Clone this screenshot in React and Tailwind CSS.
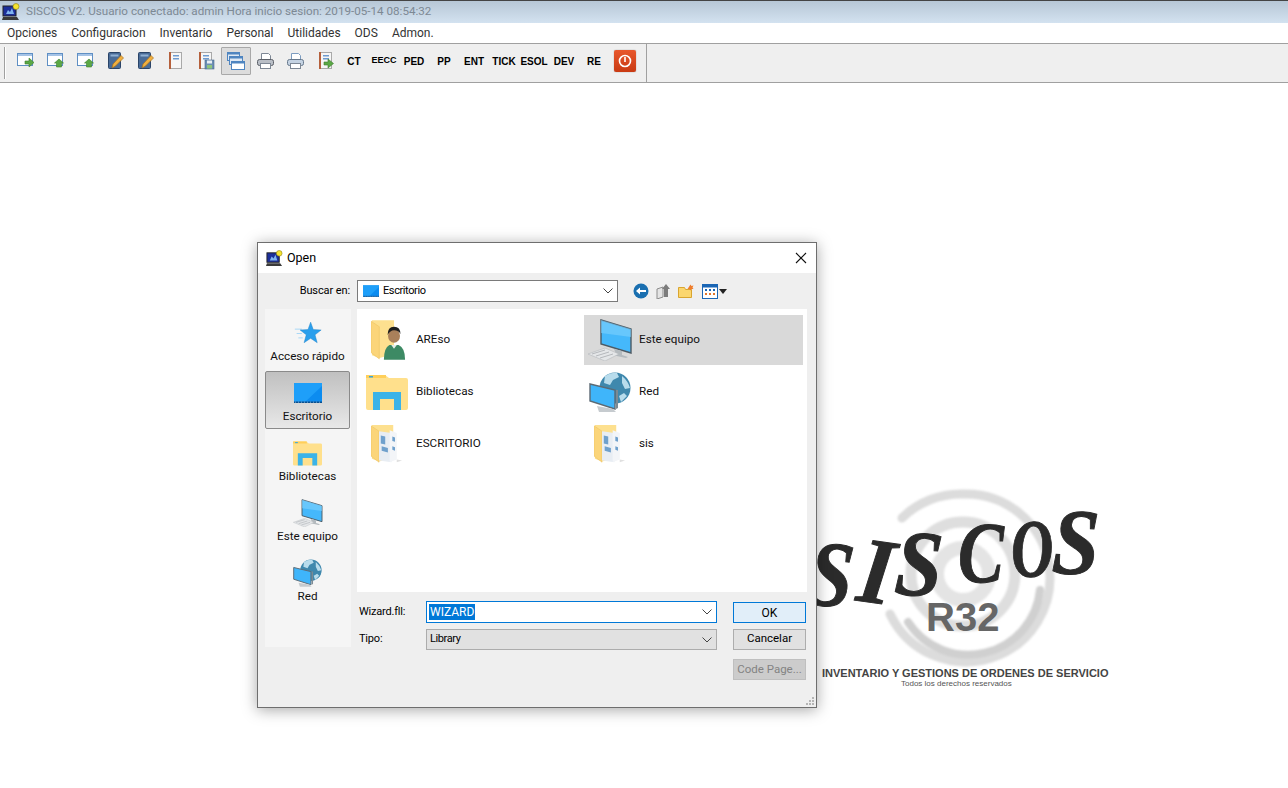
import React from "react";

const sans = "font-['Roboto','Noto_Sans',sans-serif]";

const Win = ({ up }) => (
  <svg width="18" height="18" viewBox="0 0 18 18">
    <rect x="0.500" y="1.500" width="15" height="12" fill="#fff" stroke="#5f8fc4" />
    <rect x="1" y="2" width="14" height="2" fill="#a5c3e6" />
    {up ? (
      <path d="M12 7l4.500 4H14.500v4h-5v-4H7.500z" fill="#5aa845" stroke="#3f7d30" strokeWidth="0.600" />
    ) : (
      <path d="M8 9h4V6l5 4.500-5 4.500v-3H8z" fill="#5aa845" stroke="#3f7d30" strokeWidth="0.600" />
    )}
  </svg>
);
const Book = () => (
  <svg width="18" height="18" viewBox="0 0 18 18">
    <rect x="1.500" y="0.500" width="12" height="16" rx="1" fill="#4a6c98" stroke="#2a4468" />
    <rect x="3.500" y="2.500" width="8" height="2" fill="#8fb0d4" />
    <path d="M5 16l1-4L14 3.500l2.500 2.500L8.500 14z" fill="#f0b040" stroke="#a8701c" strokeWidth="0.700" />
  </svg>
);
const Notebook = ({ kind }) => (
  <svg width="18" height="18" viewBox="0 0 18 18">
    <rect x="2.500" y="0.500" width="12" height="16" fill="#f6f6f6" stroke="#a9a9a9" />
    <rect x="2" y="0" width="2" height="17" fill="#b5603c" />
    <rect x="6" y="3" width="6" height="1.500" fill="#6e9bd0" />
    <rect x="6" y="6" width="6" height="1.500" fill="#6e9bd0" />
    {kind === "save" && (
      <g>
        <rect x="8" y="8" width="9" height="9" fill="#6d8fb4" stroke="#46688c" strokeWidth="0.600" />
        <rect x="10" y="8.500" width="5" height="3" fill="#e8eef4" />
        <rect x="10" y="13" width="5" height="3.500" fill="#8fc67c" />
      </g>
    )}
    {kind === "arrow" && <path d="M7 10h4V7l5.500 4.500L11 16v-3H7z" fill="#5aa845" stroke="#3f7d30" strokeWidth="0.600" />}
  </svg>
);
const Stack = () => (
  <svg width="18" height="18" viewBox="0 0 18 18">
    <rect x="0.500" y="0.500" width="12" height="8" fill="#dfe9f4" stroke="#4f85c0" />
    <rect x="0.500" y="0.500" width="12" height="2" fill="#4f85c0" />
    <rect x="2.500" y="4.500" width="13" height="8" fill="#dfe9f4" stroke="#4f85c0" />
    <rect x="2.500" y="4.500" width="13" height="2" fill="#4f85c0" />
    <rect x="4.500" y="9.500" width="13" height="8" fill="#fff" stroke="#4f85c0" />
    <rect x="4.500" y="9.500" width="13" height="2" fill="#4f85c0" />
  </svg>
);
const Printer = ({ light }) => (
  <svg width="18" height="18" viewBox="0 0 18 18">
    <path d="M4.500 8V1.500h7l2 2V8z" fill="#fff" stroke={light ? "#7c9cc0" : "#7d8794"} />
    <rect x="0.500" y="7.500" width="16" height="6" rx="2" fill={light ? "#c4d2e2" : "#b9bec6"} stroke={light ? "#66788c" : "#5c6068"} />
    <rect x="3.500" y="11.500" width="10" height="5" fill="#fff" stroke="#7d8794" />
  </svg>
);

const toolIcons = [
  <Win />, <Win up />, <Win up />, <Book />, <Book />, <Notebook />, <Notebook kind="save" />, <Stack />,
  <Printer />, <Printer light />, <Notebook kind="arrow" />,
];
const toolText = ["CT", "EECC", "PED", "PP", "ENT", "TICK", "ESOL", "DEV", "RE"];

const AppIcon = ({ size = 18 }) => (
  <svg width={size} height={size} viewBox="0 0 18 18">
    <rect x="1" y="3" width="13" height="10" fill="#1c2f9a" stroke="#222" />
    <path d="M4 11l2-4 2 2 2-4 2 6z" fill="#7fb4f0" />
    <path d="M1 14h14l2 3H0z" fill="#3a3a3a" />
    <circle cx="14" cy="3.500" r="3" fill="#f5e330" stroke="#8a7d10" strokeWidth="0.600" />
  </svg>
);

const Desktop = ({ w, h }) => (
  <svg width={w} height={h} viewBox="0 0 28 20">
    <rect width="28" height="20" fill="#0c8cf0" />
    <path d="M0 0h28v3L10 20H0z" fill="#23a4fb" opacity="0.800" />
    <rect y="18.500" width="28" height="1.500" fill="#0a4f8e" />
    <path d="M1 19.200h26" stroke="#bfe4ff" strokeWidth="0.600" strokeDasharray="1 2" />
  </svg>
);
const Star = () => (
  <svg width="28" height="25" viewBox="0 0 32 26">
    <path d="M1 8h8M3 13h6M5 18h5" stroke="#9fd4f6" strokeWidth="1" />
    <path d="M19 0l3 8.500 9 .5-7 5.500 2.500 9L19 18.500 11.500 23.500 14 14.500 7 9l9-.5z" fill="#2a9fec" stroke="#1c80c8" strokeWidth="0.500" />
  </svg>
);
const LibFolder = ({ w, h }) => (
  <svg width={w} height={h} viewBox="0 0 42 35">
    <path d="M0 2q0-2 2-2h17l4 3h17q2 0 2 2v28q0 2-2 2H2q-2 0-2-2z" fill="#ffe08c" />
    <rect x="0" y="0" width="20" height="3" fill="#ffcf5a" />
    <rect x="3" y="1" width="4" height="1.500" fill="#35a6e0" />
    <path d="M7 35V17h28v18h-7V24H14v11z" fill="#3bb3e8" />
  </svg>
);
const Computer = ({ w, h }) => (
  <svg width={w} height={h} viewBox="0 0 44 42">
    <path d="M13 1l30 9v24L13 25z" fill="#45b8fb" stroke="#4c5a64" strokeWidth="1.400" />
    <path d="M13 1l30 9v8L13 14z" fill="#7fd0fd" opacity="0.600" />
    <path d="M26 30l8 2v4l6 2-2 1-14-3 4-1z" fill="#b4babe" />
    <path d="M0 35l17-6 14 6-14 7z" fill="#e4e6e8" stroke="#aeb2b6" strokeWidth="0.500" />
    <path d="M4 35l13-4M8 37l13-4M12 39l13-4" stroke="#a0a4a8" strokeWidth="0.700" />
  </svg>
);
const Network = ({ w, h }) => (
  <svg width={w} height={h} viewBox="0 0 42 40">
    <circle cx="26" cy="16" r="15.500" fill="#3f88ad" />
    <path d="M16 4q6-4 12-3l2 4-6 3-3 5-6-2zM33 4q6 5 8 12l-5 1-3-6zM30 24l5-3 3 3-6 6z" fill="#b8dcec" />
    <path d="M1 12l25 6v19L1 29z" fill="#3fb5fa" stroke="#5c6a74" strokeWidth="1.400" />
    <path d="M27 18v19l2-1V18z" fill="#7b8a94" />
    <path d="M8 34l16 3 3 3H10z" fill="#c6cbcf" />
  </svg>
);
const FolderBack = () => (
  <g>
    <path d="M1 0l24 0v37l-16 4-8-3z" fill="#fde08f" />
    <path d="M0 1l9 6v35l-9-7z" fill="#fbd57a" stroke="#e8bd58" strokeWidth="0.500" />
  </g>
);
const PersonFolder = () => (
  <svg width="35" height="43" viewBox="0 0 38 44" className="ml-[3px]">
    <FolderBack />
    <ellipse cx="25" cy="17" rx="6.500" ry="7.500" fill="#a9805a" />
    <path d="M18 16q0-9 7-9t7 8q-2-4-7-4-4 0-7 5z" fill="#1e1e1e" />
    <path d="M14 43q0-13 6-16h10q7 3 7 16z" fill="#3d8a64" />
    <path d="M22 27l3 4 3-4z" fill="#e6efe8" />
  </svg>
);
const DocsFolder = () => (
  <svg width="32" height="43" viewBox="0 0 36 44">
    <FolderBack />
    <path d="M9 7l14 2v33l-14-2z" fill="#e8edf3" />
    <path d="M21 6l8 3v30l-8 3z" fill="#f3f5f8" />
    <path d="M11 12l5 1v9l-5-1zM12 24l7 2v5l-7-2zM24 13l3 1v5l-3-1zM24 24l3 1v4l-3-1z" fill="#6fa0cc" />
    <path d="M29 39l6 1-6 2z" fill="#e0e0e0" />
  </svg>
);

const Chev = () => (
  <svg width="10" height="6" viewBox="0 0 10 6" className="shrink-0">
    <path d="M0.500 0.500L5 5l4.500-4.500" fill="none" stroke="#444" strokeWidth="1" />
  </svg>
);

const side = [
  { l: "Acceso rápido", i: <Star /> },
  { l: "Escritorio", i: <Desktop w={28} h={20} />, a: true },
  { l: "Bibliotecas", i: <LibFolder w={29} h={25} /> },
  { l: "Este equipo", i: <Computer w={30} h={28} /> },
  { l: "Red", i: <Network w={29} h={28} /> },
];
const files = [
  { l: "AREso", i: <PersonFolder /> },
  { l: "Este equipo", i: <Computer w={44} h={42} />, a: true },
  { l: "Bibliotecas", i: <LibFolder w={42} h={35} /> },
  { l: "Red", i: <Network w={42} h={40} /> },
  { l: "ESCRITORIO", i: <DocsFolder /> },
  { l: "sis", i: <DocsFolder /> },
];

const Dialog = () => (
  <div className={`absolute left-[257px] top-[242px] flex h-[466px] w-[560px] flex-col border border-[#6e6e6e] bg-[#efefef] text-[12px] text-black shadow-[0_2px_14px_rgba(0,0,0,0.35)] ${sans}`}>
    <div className="flex h-[30px] shrink-0 items-center bg-white pl-[8px] pr-[8px]">
      <AppIcon size={17} />
      <span className="ml-[4px] text-[12.500px]">Open</span>
      <svg width="12" height="12" viewBox="0 0 12 12" className="ml-auto mr-[1px]">
        <path d="M1 1l10 10M11 1L1 11" stroke="#111" strokeWidth="1.100" />
      </svg>
    </div>
    <div className="mt-[7px] flex h-[22px] shrink-0 items-center">
      <span className="w-[92px] text-right text-[11px] tracking-[-0.1px]">Buscar en:</span>
      <div className="ml-[7px] flex h-[22px] w-[261px] items-center border border-[#7a7a7a] bg-white pl-[5px] pr-[4px]">
        <Desktop w={16} h={12} />
        <span className="ml-[4px] text-[11px] tracking-[-0.4px]">Escritorio</span>
        <span className="ml-auto"><Chev /></span>
      </div>
      <div className="ml-[15px] flex items-center">
        <svg width="16" height="16" viewBox="0 0 16 16">
          <circle cx="8" cy="8" r="7.500" fill="#1a6fb0" />
          <path d="M3 8l4-3.500V7h6v2H7v2.500z" fill="#fff" />
        </svg>
        <svg width="15" height="16" viewBox="0 0 15 16" className="ml-[7px]">
          <path d="M1 6l6-2v10l-6 2z" fill="#e4e4e4" stroke="#8c8c8c" />
          <path d="M8 14V6H6l4-5 4 5h-2v8z" fill="#7c7c7c" />
        </svg>
        <svg width="16" height="14" viewBox="0 0 16 14" className="ml-[7px]">
          <path d="M0.500 3.500h6l1 2h6v8h-13z" fill="#fbd66e" stroke="#d9a530" />
          <path d="M12.500 0.500l1 1.500 2-.5-1 2 1 1.500h-2l-1 1.500-1-1.500h-2l1-1.500z" fill="#ef7d2c" />
        </svg>
        <svg width="16" height="15" viewBox="0 0 16 15" className="ml-[8px]">
          <rect x="0.500" y="0.500" width="15" height="14" fill="#fff" stroke="#1a66b5" />
          <rect x="1" y="1" width="14" height="2.500" fill="#1a66b5" />
          <path d="M3 5h2v2H3zM7 5h2v2H7zM11 5h2v2h-2z" fill="#1a66b5" />
          <path d="M3 9h2v2H3zM7 9h2v2H7zM11 9h2v2h-2z" fill="#e2762c" />
        </svg>
        <svg width="8" height="5" viewBox="0 0 8 5" className="ml-[1px]"><path d="M0 0h8L4 5z" fill="#222" /></svg>
      </div>
    </div>
    <div className="mt-[7px] flex pl-[7px]">
      <div className="mr-[6px] h-[338px] w-[86px] shrink-0 bg-[#f5f5f5] pt-[2px]">
        {side.map((s) => (
          <div
            key={s.l}
            className={`mb-[2px] flex h-[58px] w-[85px] flex-col items-center rounded-[2px] ${s.a ? "border border-[#8a8a8a] bg-gradient-to-b from-[#c0c0c0] to-[#e8e8e8] pt-[7px]" : "pt-[8px]"}`}
          >
            <div className="flex h-[28px] items-center justify-center">{s.i}</div>
            <span className="mt-[1px] text-[11.700px] leading-[16px] text-[#111]">{s.l}</span>
          </div>
        ))}
      </div>
      <div className="flex w-[450px] flex-col">
        <div className="grid h-[283px] grid-cols-[223px_223px] content-start gap-y-[2px] bg-white pl-[4px] pt-[6px]">
          {files.map((f) => (
            <div key={f.l} className={`flex h-[50px] w-[219px] items-center ${f.a ? "bg-[#d9d9d9]" : ""}`}>
              <div className="flex w-[55px] shrink-0 items-center justify-center pr-[3px]">{f.i}</div>
              <span className="text-[11.700px] text-[#111]">{f.l}</span>
            </div>
          ))}
        </div>
        <div className="mt-[9px] flex items-center text-[11px]">
          <span className="w-[69px] pl-[2px] tracking-[-0.2px]">Wizard.fll:</span>
          <div className="flex h-[22px] w-[291px] items-center border border-[#0078d7] bg-white pl-[2px] pr-[4px]">
            <span className="bg-[#0078d7] px-[1px] text-[12px] leading-[16px] text-white">WIZARD</span>
            <span className="ml-auto"><Chev /></span>
          </div>
          <div className="ml-[16px] mt-[1px] flex h-[21px] w-[73px] items-center justify-center border border-[#0078d7] bg-[#e1eef9] text-[12px]">OK</div>
        </div>
        <div className="mt-[6px] flex items-center text-[11px]">
          <span className="w-[69px] pl-[2px] tracking-[-0.2px]">Tipo:</span>
          <div className="flex h-[21px] w-[291px] items-center border border-[#acacac] bg-[#e1e1e1] pl-[3px] pr-[4px]">
            <span className="tracking-[-0.4px]">Library</span>
            <span className="ml-auto"><Chev /></span>
          </div>
          <div className="ml-[16px] -mt-[1px] flex h-[21px] w-[73px] items-center justify-center border border-[#adadad] bg-[#e1e1e1] text-[11.500px]">Cancelar</div>
        </div>
        <div className="ml-[376px] mt-[9px] flex h-[21px] w-[73px] items-center justify-center border border-[#bfbfbf] bg-[#cccccc] text-[11.500px] text-[#838383]">Code Page...</div>
      </div>
    </div>
    <svg width="10" height="10" viewBox="0 0 10 10" className="absolute bottom-[1px] right-[1px]">
      <path d="M7 1h2v2H7zM4 4h2v2H4zM7 4h2v2H7zM1 7h2v2H1zM4 7h2v2H4zM7 7h2v2H7z" fill="#b5b5b5" />
    </svg>
  </div>
);

const letters = [
  { c: "S", x: 814, y: 525, s: 94, r: 6, k: 0.85 },
  { c: "I", x: 866, y: 522, s: 94, r: 8, k: 0.95 },
  { c: "S", x: 899, y: 515, s: 94, r: 4, k: 0.9 },
  { c: "C", x: 958, y: 510, s: 86, r: 0, k: 0.8 },
  { c: "O", x: 1008, y: 510, s: 82, r: -4, k: 0.72 },
  { c: "S", x: 1054, y: 494, s: 94, r: 2, k: 0.9 },
];

const Logo = () => (
  <>
    <svg width="190" height="190" viewBox="0 0 190 190" className="absolute left-[868px] top-[482px] blur-[1.200px]">
      <g fill="none" strokeLinecap="round">
        <path d="M22 132A84 84 0 1 0 95 12A84 84 0 0 0 34 36" strokeWidth="9" stroke="#dcdcdc" />
        <path d="M172 108A72 72 0 0 1 40 140" strokeWidth="8" stroke="#d0d0d0" />
        <circle cx="95" cy="92" r="52" strokeWidth="11" stroke="#dedede" />
        <circle cx="95" cy="92" r="26" strokeWidth="14" stroke="#e4e4e4" />
      </g>
    </svg>
    {letters.map((l, i) => (
      <span
        key={i}
        style={{ left: l.x, top: l.y, fontSize: l.s, transform: `rotate(${l.r}deg) scaleX(${l.k})` }}
        className="absolute origin-top-left font-['Liberation_Serif',serif] font-bold italic leading-none text-[#2b2b2b] [-webkit-text-stroke:1px_#2b2b2b]"
      >
        {l.c}
      </span>
    ))}
    <span className="absolute left-[926px] top-[594px] font-['Liberation_Sans',Arial,sans-serif] text-[40px] font-bold leading-[46px] text-[#666666]">R32</span>
    <span className="absolute left-[822px] top-[666px] whitespace-nowrap font-['Liberation_Sans',Arial,sans-serif] text-[11px] font-bold leading-[14px] text-[#444444]">INVENTARIO Y GESTIONS DE ORDENES DE SERVICIO</span>
    <span className="absolute left-[901px] top-[679px] whitespace-nowrap font-['Liberation_Sans',Arial,sans-serif] text-[8px] leading-[10px] text-[#555555]">Todos los derechos reservados</span>
  </>
);

export default function App() {
  return (
    <div className={`relative h-[788px] w-[1288px] overflow-hidden bg-white ${sans}`}>
      <div className="flex h-[23px] items-center border-t border-[#444444] bg-gradient-to-b from-[#b7c7d6] to-[#d3e2f0] pl-[2px]">
        <AppIcon size={18} />
        <span className="ml-[6px] text-[11.650px] text-[#7d8994]">SISCOS V2. Usuario conectado: admin Hora inicio sesion: 2019-05-14 08:54:32</span>
      </div>
      <div className="flex h-[20px] items-center gap-[14px] pl-[7px] text-[12px] text-[#333]">
        {["Opciones", "Configuracion", "Inventario", "Personal", "Utilidades", "ODS", "Admon."].map((m) => (
          <span key={m}>{m}</span>
        ))}
      </div>
      <div className="flex h-[40px] border-y border-[#a0a0a0] bg-[#efefef]">
        <div className="flex h-full w-[647px] items-center border-r border-[#a0a0a0] pl-[4px]">
          <div className="h-[32px] w-[2px] border-l border-[#a0a0a0] bg-white" />
          <div className="mb-[4px] ml-[5px] flex items-center">
            {toolIcons.map((ic, i) => (
              <div
                key={i}
                className={`flex h-[28px] w-[30px] items-center justify-center ${i === 7 ? "rounded-[1px] border border-[#a8a8a8] bg-[#dcdcdc]" : ""}`}
              >
                {ic}
              </div>
            ))}
            <div className="-ml-[2px] flex">
              {toolText.map((t) => (
                <div
                  key={t}
                  className={`flex h-[28px] w-[30px] items-center justify-center whitespace-nowrap font-['Liberation_Sans',Arial,sans-serif] font-bold text-black ${t === "EECC" ? "text-[9px]" : "text-[10px]"}`}
                >
                  {t}
                </div>
              ))}
            </div>
            <div className="ml-[5px] flex h-[22px] w-[22px] items-center justify-center rounded-[2px] bg-gradient-to-b from-[#e8572c] to-[#c93a12] shadow-[0_0_1px_#666]">
              <svg width="14" height="14" viewBox="0 0 14 14">
                <circle cx="7" cy="7" r="5.500" fill="none" stroke="#fff" strokeWidth="1.600" />
                <rect x="6.200" y="3" width="1.600" height="5" fill="#fff" />
              </svg>
            </div>
          </div>
        </div>
      </div>
      <Logo />
      <Dialog />
    </div>
  );
}
